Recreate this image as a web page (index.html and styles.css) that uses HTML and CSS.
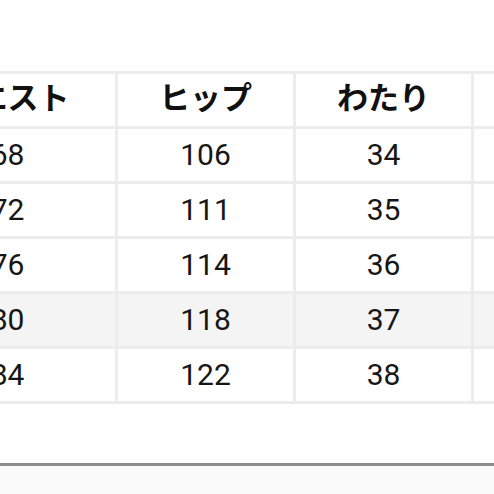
FILE: index.html
```html
<!DOCTYPE html>
<html lang="ja">
<head>
<meta charset="utf-8">
<link rel="stylesheet" href="styles.css">
</head>
<body>
<div class="page">
  <div class="scroller">
    <table class="size-table">
      <colgroup>
        <col class="col-first">
        <col class="col-std">
        <col class="col-std">
        <col class="col-std">
      </colgroup>
      <thead>
        <tr>
          <th>ウエスト</th>
          <th>ヒップ</th>
          <th>わたり</th>
          <th>股下</th>
        </tr>
      </thead>
      <tbody>
        <tr><td>68</td><td>106</td><td>34</td><td>72</td></tr>
        <tr><td>72</td><td>111</td><td>35</td><td>73</td></tr>
        <tr><td>76</td><td>114</td><td>36</td><td>74</td></tr>
        <tr class="shaded"><td>80</td><td>118</td><td>37</td><td>75</td></tr>
        <tr><td>84</td><td>122</td><td>38</td><td>76</td></tr>
      </tbody>
    </table>
  </div>
  <div class="footer-bar"></div>
</div>
</body>
</html>
```

FILE: styles.css
```css
html, body {
  margin: 0;
  padding: 0;
  background: #ffffff;
}

.page {
  width: 494px;
  height: 494px;
  overflow: hidden;
  display: flex;
  flex-direction: column;
}

.scroller {
  padding-top: 71px;
  height: 392px;
  overflow: hidden;
}

.size-table {
  margin-left: -103px;
  border-collapse: collapse;
  table-layout: fixed;
  width: 752px;
  font-family: Roboto, "Noto Sans CJK JP", sans-serif;
  color: #161616;
}

.col-first {
  width: 218px;
}

.col-std {
  width: 178px;
}

.size-table th,
.size-table td {
  border: 3px solid #ececec;
  text-align: center;
  padding: 0;
}

.size-table th {
  font-family: "Noto Sans CJK JP", "Noto Sans", sans-serif;
  font-weight: 700;
  font-size: 31px;
  color: #111111;
  height: 42px;
  line-height: 1;
  padding-bottom: 10px;
}

.size-table td {
  font-size: 30px;
  height: 52px;
  line-height: 1;
}

.size-table tr.shaded td {
  background: #f4f4f4;
}

.footer-bar {
  margin-top: auto;
  height: 28px;
  border-top: 3px solid #8c8c8c;
  background: #fafafa;
}
```
